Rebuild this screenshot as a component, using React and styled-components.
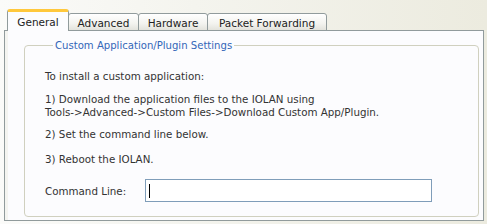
import styled, { createGlobalStyle } from 'styled-components'

const GlobalStyle = createGlobalStyle`
  html, body {
    margin: 0;
    padding: 0;
  }
  body {
    font-family: "DejaVu Sans", Verdana, sans-serif;
  }
`;

const Window = styled.div`
  width: 487px;
  height: 224px;
  box-sizing: border-box;
  padding: 10px 3px 3px 4px;
  background: linear-gradient(to right, #fbfbf9 0%, #f4f4ee 40%, #ecebdf 100%);
  display: flex;
  flex-direction: column;
  overflow: hidden;
`;

const TabStrip = styled.div`
  display: flex;
  align-items: flex-end;
  padding-left: 3px;
  height: 21px;
  margin-bottom: -1px;
  position: relative;
  z-index: 1;
`;

const Tab = styled.div`
  box-sizing: border-box;
  width: ${({w}) => w}px;
  height: ${({active}) => active ? 22 : 18}px;
  margin-right: -1px;
  display: flex;
  align-items: center;
  justify-content: center;
  font-size: 10.5px;
  color: #222;
  border: 1px solid #919b9c;
  border-bottom: ${({active}) => active ? "none" : "1px solid #919b9c"};
  border-top: ${({active}) => active ? "3px solid #ffc83c" : "1px solid #919b9c"};
  border-radius: 3px 3px 0 0;
  background: ${({active}) => active
    ? "#fcfcfe"
    : "linear-gradient(to bottom, #ffffff 0%, #f3f3ef 60%, #e3e3dc 100%)"};
  padding-top: ${({active}) => active ? 0 : 1}px;
`;

const Panel = styled.div`
  flex: 1;
  box-sizing: border-box;
  border: 1px solid #919b9c;
  background: #fcfcfe;
  padding: 8px 4px 3px 19px;
  display: flex;
  box-shadow: inset 3px 0 0 #f4f4f0;
`;

const Group = styled.fieldset`
  flex: 1;
  margin: 0;
  padding: 18px 20px 0 20px;
  border: 1px solid #d0d0bf;
  border-radius: 4px;
  min-width: 0;
`;

const Caption = styled.legend`
  margin-left: 8px;
  padding: 0 2px;
  color: #3366b8;
  font-size: 10.1px;
  line-height: 13px;
`;

const Line = styled.p`
  margin: ${({gap}) => gap}px 0 0 0;
  font-size: 10.3px;
  line-height: 13px;
  color: #333;
  white-space: nowrap;
`;

const FieldRow = styled.div`
  display: flex;
  align-items: center;
  gap: 9px;
  margin-top: 13px;
`;

const Label = styled.span`
  font-size: 10.3px;
  color: #333;
  width: 91px;
`;

const TextBox = styled.div`
  box-sizing: border-box;
  width: 287px;
  height: 23px;
  border: 1px solid #7f9db9;
  background: #ffffff;
  display: flex;
  align-items: center;
  padding-left: 3px;
`;

const Caret = styled.span`
  width: 1px;
  height: 14px;
  background: #000;
`;

const tabs = [
  {name: "General", w: 62, active: true},
  {name: "Advanced", w: 71},
  {name: "Hardware", w: 70},
  {name: "Packet Forwarding", w: 120},
]

export default function App() {
  return <>
    <GlobalStyle />
    <Window>
      <TabStrip>
        {tabs.map((t, i) =>
          <Tab key={i} w={t.w} active={t.active}>{t.name}</Tab>
        )}
      </TabStrip>
      <Panel>
        <Group>
          <Caption>Custom Application/Plugin Settings</Caption>
          <Line gap={0}>To install a custom application:</Line>
          <Line gap={10}>1) Download the application files to the IOLAN using<br />Tools-&gt;Advanced-&gt;Custom Files-&gt;Download Custom App/Plugin.</Line>
          <Line gap={9}>2) Set the command line below.</Line>
          <Line gap={12}>3) Reboot the IOLAN.</Line>
          <FieldRow>
            <Label>Command Line:</Label>
            <TextBox><Caret /></TextBox>
          </FieldRow>
        </Group>
      </Panel>
    </Window>
  </>
}
